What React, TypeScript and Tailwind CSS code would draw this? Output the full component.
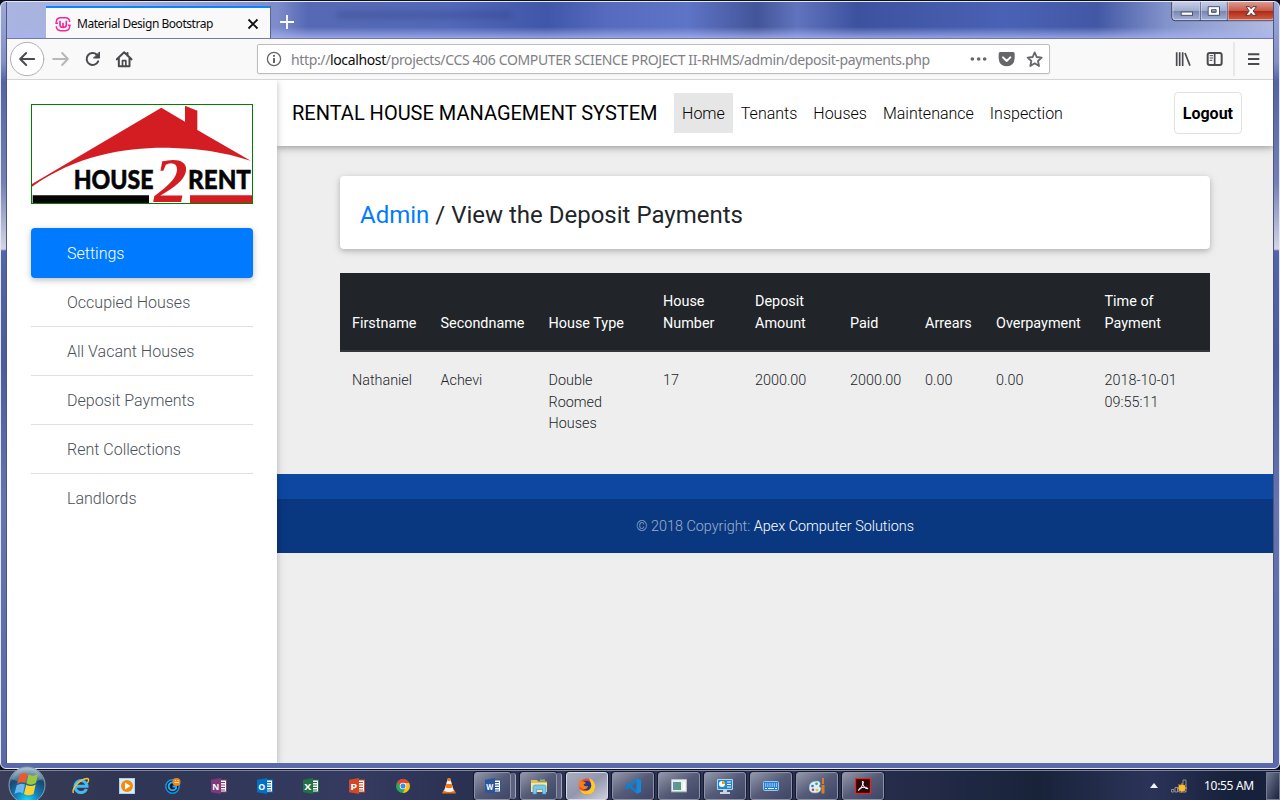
import React from "react";

const sans = "font-['Roboto',sans-serif]";
const ui = "font-['Noto_Sans',sans-serif]";

function TitleBar() {
  return (
    <div className="relative flex h-[36px] shrink-0 overflow-hidden bg-[linear-gradient(90deg,#aab4e0_0px,#a3aedb_110px,#7d8cca_270px,#5669b4_300px,#5268b8_440px,#4056a8_540px,#566bbd_600px,#5e74c6_680px,#435599_750px,#6074bd_790px,#3d529f_850px,#4a62b5_1000px,#4258a5_1090px,#8393cb_1160px,#b3bde2_1270px)]">
      <div className="pointer-events-none absolute inset-x-0 bottom-0 h-[11px] bg-gradient-to-b from-[#a8b2f000] to-[#a8b2f0cc]" />
      <div className="absolute left-[330px] top-[10px] h-[6px] w-[175px] bg-[#24306a] opacity-30 blur-[3px]" />
      <div className="relative ml-[39px] mt-[4px] flex h-[32px] w-[225px] items-center border-r border-[#5b6490] bg-[#f9f9fa] shadow-[inset_0_2px_0_#0a84ff]">
        <svg viewBox="165 48 48 48" className="ml-[9px] mt-[3px] h-4 w-4" fill="none" stroke="#f0289c" strokeWidth="4.500">
          <path d="M169 68V66Q169 53 182 53H196Q209 53 209 66M209 77V79Q209 92 196 92H182Q169 92 169 79" />
          <path d="M166 70H174M204 76H212" />
          <path d="M180 62V74Q180 82 189 82V68V82Q199 82 199 74V62" strokeWidth="5" />
        </svg>
        <span className={`${ui} ml-[6px] mt-[3px] w-[150px] whitespace-nowrap text-[12px] tracking-[-0.47px] text-[#0c0c0d]`}>Material Design Bootstrap</span>
        <svg viewBox="0 0 12 12" className="ml-[20px] mt-[3px] h-3 w-3" stroke="#111" strokeWidth="1.900"><path d="M1.500 1.500 10.500 10.500M10.500 1.500 1.500 10.500" /></svg>
      </div>
      <svg viewBox="0 0 16 16" className="relative ml-[8px] mt-[12px] h-4 w-4" stroke="#fff" strokeWidth="1.800"><path d="M8 1V15M1 8H15" /></svg>
      <svg viewBox="964 6 314 60" className="absolute right-[-3px] top-0 h-[20px] w-[105px]">
        <defs>
          <linearGradient id="cap" x2="0" y2="1"><stop stopColor="#c9d1e8" /><stop offset=".48" stopColor="#a0abcf" /><stop offset=".5" stopColor="#7684b1" /><stop offset="1" stopColor="#a7b3d8" /></linearGradient>
          <linearGradient id="closeBtn" x2="0" y2="1"><stop stopColor="#dd9a90" /><stop offset=".48" stopColor="#c65849" /><stop offset=".5" stopColor="#ac2a17" /><stop offset="1" stopColor="#d6603f" /></linearGradient>
        </defs>
        <path d="M966 4H1274V52Q1274 62 1264 62H976Q966 62 966 52Z" fill="url(#cap)" stroke="#333b5c" strokeWidth="3" />
        <path d="M1133 6H1273V52Q1273 61 1264 61H1133Z" fill="url(#closeBtn)" />
        <path d="M969 6V52Q969 59 976 59H1049V6M1054 6V59H1130V6M1135 6V59H1264Q1271 59 1271 52V6" fill="none" stroke="#e8ecf8" strokeOpacity=".75" strokeWidth="2.500" />
        <path d="M1051.500 6V62M1132 6V62" stroke="#4b5478" strokeWidth="2.500" />
        <rect x="994" y="36" width="34" height="10" fill="#fff" stroke="#4a5168" strokeWidth="3" />
        <path d="M1075 20H1109V46H1075Z M1085 29V37H1099V29Z" fill="#fff" fillRule="evenodd" stroke="#4a5168" strokeWidth="3" />
        <path d="M1189 20H1199L1204 26L1209 20H1220L1210 33L1220 46H1209L1204 40L1199 46H1188L1198 33Z" fill="#fff" stroke="#60343a" strokeWidth="3" />
      </svg>
    </div>
  );
}

function Toolbar() {
  return (
    <div className="flex h-[42px] shrink-0 items-center border-b border-t border-b-[#d5d5d8] border-t-[#747ba3] bg-[#f9f9fa]">
      <svg viewBox="21 117 380 123" className="h-[41px] w-[127px] shrink-0" fill="none" stroke="#4a4a4f" strokeWidth="6" strokeLinecap="round" strokeLinejoin="round">
        <circle cx="81" cy="177" r="50" fill="#fff" stroke="#b1b1b3" strokeWidth="3" />
        <path d="M102 177H61M78 159L60 177L78 195" />
        <path d="M159 177H202M186 159L203 177L186 195" stroke="#b8b8ba" />
        <path d="M294 184A18 18 0 1 1 290 164" />
        <path d="M298 157V174H281Z" fill="#4a4a4f" strokeWidth="3" />
        <path d="M350 178L372 157L394 178M356 175V199H388V175M382 159V167" />
        <path d="M367 199V182H377V199" strokeWidth="5" />
      </svg>
      <div className="ml-[123px] flex h-[30px] w-[793px] items-center rounded-[2px] border border-[#bcbcbf] bg-white shadow-[0_1px_2px_#0000000d]">
        <svg viewBox="0 0 16 16" className="ml-[8px] h-4 w-4" fill="none" stroke="#66666a" strokeWidth="1.300"><circle cx="8" cy="8" r="6.600" /><path d="M8 7V12M8 4V5.700" strokeWidth="2" /></svg>
        <span className={`${ui} ml-[9px] w-[660px] whitespace-nowrap text-[14px] tracking-[-0.365px] text-[#808084]`}>
          http://<span className="text-[#0c0c0d]">localhost</span>/projects/CCS 406 COMPUTER SCIENCE PROJECT II-RHMS/admin/deposit-payments.php
        </span>
        <svg viewBox="355 147 240 60" className="ml-[17px] h-[20px] w-[80px]" fill="#66666a">
          <circle cx="368" cy="177" r="5.500" /><circle cx="387" cy="177" r="5.500" /><circle cx="405" cy="177" r="5.500" />
          <path d="M452 156H490Q495 156 495 161V174Q494 198 471 199Q448 198 447 174V161Q447 156 452 156Z" />
          <path d="M460 172L471 183L482 172" fill="none" stroke="#fff" strokeWidth="6" strokeLinecap="round" strokeLinejoin="round" />
          <path d="M555 157L561 171L576 173L565 183L568 198L555 190L542 198L545 183L534 173L549 171Z" fill="none" stroke="#66666a" strokeWidth="5.500" strokeLinejoin="round" />
        </svg>
      </div>
      <svg viewBox="970 117 300 123" className="ml-auto h-[41px] w-[100px] shrink-0" fill="none" stroke="#4a4a4f" strokeWidth="6">
        <path d="M981 157V198M990 157V198M999 157V198M1006 159L1021 197" strokeWidth="5" />
        <rect x="1074" y="159" width="42" height="36" rx="6" />
        <path d="M1095 159V195" strokeWidth="5" /><path d="M1080 167H1090M1080 174H1090M1080 181H1088" strokeWidth="3" />
        <path d="M1153 126V228" stroke="#d7d7db" strokeWidth="3" />
        <path d="M1195 163H1229M1195 177H1229M1195 192H1229" />
      </svg>
    </div>
  );
}

function Logo() {
  return (
    <svg viewBox="96 75 660 294" preserveAspectRatio="none" className="h-[100px] w-[222px] overflow-visible border border-[#008000] bg-white">
      <path d="M96 312L484 83L555 125V77L592 92V150L752 242Q640 205 520 204C400 200 240 218 96 320Z" fill="#d31d23" />
      <path d="M98 346H447V369H98Z" fill="#050505" />
      <path d="M570 346H756V369H570Z" fill="#d31d23" />
      <g fontFamily="Lato" fontWeight="900" fontSize="80" fill="#050505" stroke="#050505" strokeWidth="1.500">
        <text x="221" y="326" textLength="240" lengthAdjust="spacingAndGlyphs">HOUSE</text>
        <text x="564" y="326" textLength="189" lengthAdjust="spacingAndGlyphs">RENT</text>
      </g>
      <text x="462" y="366" fontFamily="Liberation Serif" fontWeight="700" fontStyle="italic" fontSize="190" textLength="101" lengthAdjust="spacingAndGlyphs" fill="#d31d23" stroke="#fff" strokeWidth="5" paintOrder="stroke">2</text>
    </svg>
  );
}

const sideItems = ["Occupied Houses", "All Vacant Houses", "Deposit Payments", "Rent Collections", "Landlords"];

function Sidebar() {
  return (
    <aside className="relative z-10 flex w-[270px] shrink-0 flex-col bg-white px-6 pt-6 shadow-[0_2px_5px_rgba(0,0,0,.16),0_2px_10px_rgba(0,0,0,.12)]">
      <Logo />
      <nav className="mt-6 flex flex-col text-[16px] font-light text-[#495057]">
        <a className="flex h-[50px] items-center rounded-[4px] bg-[#007bff] pl-9 pt-[2px] text-white shadow-[0_2px_5px_rgba(0,0,0,.16),0_2px_10px_rgba(0,0,0,.12)]">Settings</a>
        {sideItems.map((t) => (
          <a key={t} className="flex h-[49px] items-center border-b border-[#dfdfdf] pl-9 pt-[2px] last:border-transparent">{t}</a>
        ))}
      </nav>
    </aside>
  );
}

const links = ["Home", "Tenants", "Houses", "Maintenance", "Inspection"];
const heads: [string, string][] = [
  ["Firstname", "w-[88.500px]"],
  ["Secondname", "w-[108px]"],
  ["House Type", "w-[114.500px]"],
  ["House Number", "w-[92px]"],
  ["Deposit Amount", "w-[95px]"],
  ["Paid", "w-[75px]"],
  ["Arrears", "w-[71px]"],
  ["Overpayment", "w-[108.500px]"],
  ["Time of Payment", "w-[117.500px]"],
];
const row = ["Nathaniel", "Achevi", "Double Roomed Houses", "17", "2000.00", "2000.00", "0.00", "0.00", "2018-10-01 09:55:11"];

function Page() {
  return (
    <div className={`${sans} flex min-h-0 flex-1 overflow-hidden bg-[#eee] text-[#212529]`}>
      <Sidebar />
      <main className="flex min-w-0 flex-1 flex-col">
        <header className="flex h-[66px] shrink-0 items-center bg-white pl-[15px] pr-[31px] shadow-[0_2px_5px_rgba(0,0,0,.2),0_2px_10px_rgba(0,0,0,.16)]">
          <span className="mr-[16.500px] whitespace-nowrap text-[20px] text-black">RENTAL HOUSE MANAGEMENT SYSTEM</span>
          <nav className="flex text-[16px] font-light text-black">
            {links.map((t) => (
              <a key={t} className="flex h-10 items-center px-2 pt-px first:bg-[#e6e6e6]">{t}</a>
            ))}
          </nav>
          <a className="ml-auto flex h-[42px] items-center rounded-[4px] border border-[#dee2e6] px-2 pt-px text-[16px] font-bold text-black">Logout</a>
        </header>
        <section className="pl-[63px] pr-[63px] pt-[30px]">
          <h4 className="flex h-[73px] items-center whitespace-pre rounded-[4px] bg-white px-5 pt-[5px] text-[24px] shadow-[0_2px_5px_rgba(0,0,0,.16),0_2px_10px_rgba(0,0,0,.12)]">
            <span className="text-[#007bff]">Admin</span> / View the Deposit Payments
          </h4>
          <table className="mt-6 w-[870px] table-fixed border-separate border-spacing-0 text-left text-[14.400px] leading-[21.600px]">
            <thead>
              <tr className="bg-[#212529] text-white">
                {heads.map(([t, w]) => (
                  <th key={t} className={`${w} h-[79px] border-b-2 border-[#32383e] px-3 pb-[15px] pt-[18px] align-bottom font-normal leading-[22px]`}>{t}</th>
                ))}
              </tr>
            </thead>
            <tbody>
              <tr className="h-[122px]">
                {row.map((t, i) => (
                  <td key={i} className="px-3 pt-[18px] align-top font-light">{t}</td>
                ))}
              </tr>
            </tbody>
          </table>
        </section>
        <footer className="bg-[#0d47a1] pt-[25px] text-center text-[14.400px] font-light">
          <div className="flex h-[54px] items-center justify-center whitespace-pre bg-black/20 pt-[2px] text-white/60">
            © 2018 Copyright: <span className="text-white">Apex Computer Solutions</span>
          </div>
        </footer>
      </main>
    </div>
  );
}

function Office({ letter, color }: { letter: string; color: string }) {
  return (
    <svg viewBox="0 0 16 16" className="h-4 w-4">
      <rect x="8" y="2" width="7.500" height="12" fill="#fff" stroke={color} />
      <path d="M10 4.500H14M10 7H14M10 9.500H14M10 12H14" stroke={color} strokeWidth="1.200" />
      <path d="M0 1.800L10 0V16L0 14.200Z" fill={color} />
      <text x="1.200" y="11.500" fontSize="9.500" fontWeight="700" fontFamily="Open Sans" fill="#fff" textLength="7" lengthAdjust="spacingAndGlyphs">{letter}</text>
    </svg>
  );
}

const pinned = [
  <svg viewBox="0 0 18 18" className="h-[18px] w-[18px]" fill="none"><path d="M14.500 12A6 6 0 1 1 15 9.200H4" stroke="#48b9ee" strokeWidth="3" /><path d="M1.500 16C-1 12 8 2 15 1.500Q18 1.500 15.500 6" stroke="#f0c23c" strokeWidth="1.400" /></svg>,
  <svg viewBox="0 0 16 16" className="h-4 w-4"><path d="M0 0H16V16H0Z" fill="#a9d4ee" /><path d="M1 1H15V15H1Z" fill="#d8edf8" /><circle cx="8" cy="8" r="6" fill="#f58b0c" /><path d="M6 4.500L11.500 8L6 11.500Z" fill="#fff" /></svg>,
  <svg viewBox="0 0 16 16" className="h-4 w-4" fill="none"><circle cx="7.500" cy="8.500" r="6.700" fill="#071a2c" stroke="#1594e4" strokeWidth="1.500" /><path d="M10.500 5.500A4 4 0 1 0 11 10.500V8.500H7.500" stroke="#29a8ee" strokeWidth="2" /><circle cx="11.500" cy="4" r="4" fill="#ef861c" /><path d="M9.500 4.500H14M10.500 2V3M13 2V3" stroke="#ffe6b0" /></svg>,
  <Office letter="N" color="#80397b" />,
  <Office letter="O" color="#0072c6" />,
  <Office letter="X" color="#217346" />,
  <Office letter="P" color="#d24726" />,
  <svg viewBox="0 0 16 16" className="h-[14px] w-[14px]"><circle cx="8" cy="8" r="8" fill="#32a753" /><path d="M8 8L1 4A8 8 0 0 1 15 4Z" fill="#e64335" /><path d="M8 4.500H15A8 8 0 0 1 8 16L11 9Z" fill="#fbc116" /><circle cx="8" cy="8" r="3.700" fill="#fff" /><circle cx="8" cy="8" r="2.900" fill="#4285f4" /></svg>,
  <svg viewBox="0 0 16 16" className="h-4 w-4"><path d="M2.500 12H13.500L15 15.500H1Z" fill="#e9700e" /><path d="M7 0H9L13 13Q8 15 3 13Z" fill="#f3f3f3" /><path d="M7 0H9L9.800 3H6.200ZM5.300 6H10.700L11.700 9.500Q8 11 4.300 9.500Z" fill="#f27a12" /></svg>,
];

const open = [
  <Office letter="W" color="#2b579a" />,
  <svg viewBox="0 0 18 18" className="h-[18px] w-[18px]"><path d="M1 3H7L8 4.500H17V15H1Z" fill="#e3bf59" /><path d="M1 6H17V15H1Z" fill="#f9e7a0" /><path d="M10 2.500H15V4H10Z" fill="#76c277" /><path d="M3 17V10Q3 8 5 8H14Q16 8 16 10V17H12.500V12.500H6.500V17Z" fill="#79c7e9" stroke="#3d94c3" strokeWidth=".6" /></svg>,
  <svg viewBox="0 0 18 18" className="h-[18px] w-[18px]"><circle cx="9" cy="9.500" r="8" fill="#f0482b" /><path d="M11 1Q18 4 17 11Q16 17 9 17.500Q3 17 1.500 12Q6 16 11 13Q15 9 11 1Z" fill="#ffca24" /><circle cx="8.500" cy="8.500" r="4.800" fill="#213b8f" /><path d="M1 9Q0 4 3 2L4 4.500Q7 4 8 6L5.500 7.500Q6 10 10 9Q9 13 5 12Q2 11 1 9Z" fill="#fb7e16" /></svg>,
  <svg viewBox="0 0 16 16" className="h-4 w-4"><path d="M11.500 0L16 2V14L11.500 16L4 9.500L1.500 11.500L0 10.700V5.300L1.500 4.500L4 6.500ZM11.500 4.500L7 8L11.500 11.500Z" fill="none" /><path d="M1.200 5.200L12 14.300M1.200 10.800L12 1.700" stroke="#0f7fd0" strokeWidth="2.600" /><path d="M11.500 0L16 2V14L11.500 16Z" fill="#1688da" /></svg>,
  <svg viewBox="0 0 16 14" className="h-[14px] w-4"><path d="M0 0H16V13H0Z" fill="#e9eeee" stroke="#8a949b" /><path d="M2 3H10V11H2Z" fill="#579d84" /><path d="M2 3H6L4 11H2Z" fill="#678fb5" /><path d="M12 3H14V11H12Z" fill="#fff" /></svg>,
  <svg viewBox="0 0 16 16" className="h-4 w-4"><path d="M.5 1.500H15.500V11.500H.5Z" fill="#2388d0" stroke="#a8d8f4" /><circle cx="5" cy="6" r="3" fill="#fff" /><path d="M5 6V3A3 3 0 0 1 8 6Z" fill="#f29b21" /><path d="M10 4H14M10 6.500H14M10 9H14" stroke="#fff" /><path d="M6 12H10V14H13V16H3V14H6Z" fill="#c7d5df" /></svg>,
  <svg viewBox="0 0 16 10" className="h-[10px] w-4"><rect x=".5" y=".5" width="15" height="9" rx="1" fill="#2380d0" stroke="#91c9f3" /><path d="M2 3H14M2 5H14" stroke="#fff" strokeDasharray="1.200 1" /><path d="M2 7.500H14" stroke="#fff" strokeDasharray="2 1 6 1 2 1" /></svg>,
  <svg viewBox="0 0 16 16" className="h-4 w-4"><path d="M0 10Q0 3 8 3Q12 3 11 7Q9 8 12 10Q12 15 6 15Q0 15 0 10Z" fill="#d9eef7" stroke="#7baac6" strokeWidth=".6" /><circle cx="3.500" cy="8" r="1.300" fill="#2f75ca" /><circle cx="7.500" cy="5.800" r="1.300" fill="#36a151" /><circle cx="4" cy="11.800" r="1.300" fill="#dc3a30" /><circle cx="8" cy="12" r="1.300" fill="#eec02e" /><path d="M13 0H15V6H13ZM12.500 7H15.500V15L14 16L12.500 15Z" fill="#d97e26" /></svg>,
  <svg viewBox="0 0 16 16" className="h-4 w-4" fill="none"><rect x=".6" y=".6" width="14.800" height="14.800" fill="#2c0706" stroke="#e82418" strokeWidth="1.200" /><path d="M7.500 3Q9.500 3 7.500 7Q5.500 12 3.500 12.500Q3 10 8 9.300Q13 9 12.800 10.800Q10 11.500 8 7Q7 4 7.500 3Z" stroke="#fff" strokeWidth="1" /></svg>,
];

function Taskbar() {
  return (
    <div className="flex h-[30px] shrink-0 items-center border-t border-[#7a83a4] bg-[linear-gradient(90deg,#3a3d56_0px,#2f3553_120px,#353b60_360px,#2a3050_470px,#2e3557_700px,#252c49_900px,#18233a_1040px,#2b3458_1150px,#17213b_1230px)]">
      <svg viewBox="0 0 38 36" className="z-20 -mt-[5px] ml-[8px] h-[36px] w-[38px] shrink-0 self-start">
        <defs><radialGradient id="orb" cx=".5" cy=".95" r=".9"><stop stopColor="#19dcff" /><stop offset=".35" stopColor="#1583bd" /><stop offset=".75" stopColor="#1a4771" /><stop offset="1" stopColor="#88a7b9" /></radialGradient></defs>
        <circle cx="19" cy="19" r="18" fill="url(#orb)" stroke="#8ca0b0" />
        <path d="M3 13Q9 1 19 1.500Q29 1 35 13Q19 20 3 13Z" fill="#fff" opacity=".25" />
        <path d="M12 8.500Q15.500 6 19.500 8L17.500 17Q13 15 9 18Z" fill="#ea5b2c" /><path d="M20.500 8.500Q25 11 30 8L28 17Q23 20 18.500 17.500Z" fill="#9bc93e" /><path d="M8.700 19.200Q13 16.500 17 18.500L15 27.500Q11 25 6.500 28Z" fill="#6ab9ee" /><path d="M18.200 18.700Q22.500 21.500 27.700 18.500L25.500 28Q20 30.500 16 28Z" fill="#fbd22f" />
      </svg>
      <div className="ml-[12px] flex shrink-0">
        {pinned.map((icon, i) => (
          <div key={i} className="flex h-7 w-[46px] items-center justify-center">{icon}</div>
        ))}
      </div>
      <div className="ml-[2px] flex shrink-0 gap-1">
        {open.map((icon, i) => (
          <div key={i} className="flex h-[28px] w-[42px]">
            <div className={`flex h-full items-center justify-center rounded-[3px] border ${i < 2 ? "w-[37px]" : "w-[42px]"} ${i === 2 ? "border-[#d7d9e5] bg-gradient-to-br from-[#a8adbf] via-[#9297ae] to-[#cdcfdb]" : "border-[#8d92a7] bg-gradient-to-br from-[#9498aa] via-[#555b77] to-[#3e4566]"} shadow-[0_0_0_1px_#151a30]`}>{icon}</div>
            {i < 2 && <div className="my-px w-[5px] rounded-r-[3px] border-r border-[#a1a5b6] bg-[#5d637e]" />}
          </div>
        ))}
      </div>
      <div className="ml-auto flex h-full items-center">
        <svg viewBox="0 0 8 5" className="h-[5px] w-2"><path d="M0 5L4 0L8 5Z" fill="#f2f2f5" /></svg>
        <svg viewBox="0 0 16 15" className="ml-[13px] mt-[2px] h-[15px] w-4"><path d="M.5 10.500H3V13H.5ZM4 8.500H6.500V13H4ZM8 6H10.500V13H8ZM12 1H15V13H12Z" fill="#242b3d" stroke="#8d929d" /><path d="M11 4V14M6 9H16M7.500 5.500L14.500 12.500M14.500 5.500L7.500 12.500" stroke="#f59b12" /><circle cx="11" cy="9" r="3.300" fill="#ffbd28" /></svg>
        <span className={`${ui} ml-[17px] w-[62px] whitespace-nowrap text-[12px] tracking-[-0.3px] text-white`}>10:55 AM</span>
        <div className="h-[28px] w-[14px] border border-[#747b91] bg-gradient-to-br from-[#727a90] to-[#1b243d]" />
      </div>
    </div>
  );
}

export default function App() {
  return (
    <div className="flex h-[800px] w-[1280px] flex-col overflow-hidden bg-[#0d0f1c]">
      <div className="mt-[1px] flex h-[768px] shrink-0 rounded-[6px] border border-[#e5e8f5] bg-[linear-gradient(180deg,#9da8d8_0px,#8490c6_60px,#5465a5_80px,#7480b4_180px,#d4d5e4_247px,#5264ac_249px,#4b5b9e_360px,#6573b1_500px,#5969aa_768px)]">
        <div className="ml-[5px] mr-[5px] flex h-[761px] w-[1268px] flex-col border-x border-[#4c5680]">
          <TitleBar />
          <Toolbar />
          <Page />
        </div>
      </div>
      <div className="h-px shrink-0" />
      <Taskbar />
    </div>
  );
}
